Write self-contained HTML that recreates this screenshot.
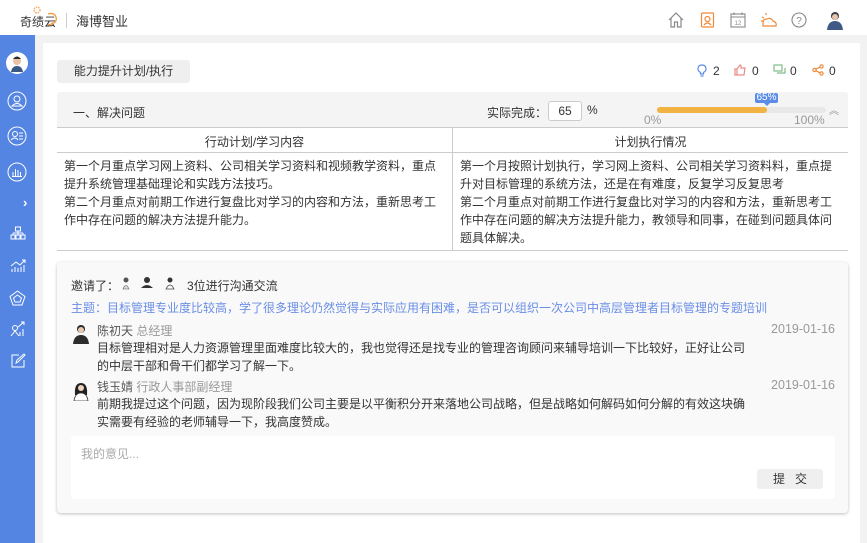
<!DOCTYPE html>
<html><head><meta charset="utf-8"><style>
*{margin:0;padding:0;box-sizing:border-box}
body{width:867px;height:543px;overflow:hidden;background:#f2f2f2;font-family:"Liberation Sans","Noto Sans CJK SC",sans-serif;font-size:12px;color:#333;position:relative}
.a{position:absolute;white-space:nowrap}
#hdr{left:0;top:0;width:867px;height:35px;background:#fff}
#side{left:0;top:35px;width:35px;height:508px;background:#5585e3}
#card{left:43px;top:43px;width:817px;height:500px;background:#fff}
.ic{position:absolute}
</style></head><body>
<div class="a" id="hdr"></div>
<div class="a" style="left:20px;top:13px;font-size:12px;color:#333">奇绩云</div>
<svg class="ic" style="left:28px;top:5px" width="32" height="22"><circle cx="9" cy="5" r="3" fill="none" stroke="#f39b3d" stroke-width="1.2" stroke-dasharray="1.5 1"/><path d="M20 20 Q30 18 28 12 Q26 7 20 9" fill="none" stroke="#f39b3d" stroke-width="1.3"/></svg>
<div class="a" style="left:66px;top:13px;width:1px;height:15px;background:#ccc"></div>
<div class="a" style="left:76px;top:11px;font-size:13px;color:#333">海博智业</div>
<svg class="ic" style="left:668px;top:12px" width="16" height="16" fill="none" stroke="#888" stroke-width="1.2"><path d="M1 8 L8 1 L15 8 M3 6 V15 H6.5 V10 H9.5 V15 H13 V6"/></svg>
<svg class="ic" style="left:700px;top:12px" width="15" height="16" fill="none" stroke="#f08a3a" stroke-width="1.2"><rect x="1.5" y="1" width="12" height="14" rx="1"/><circle cx="7.5" cy="7" r="2.5"/><path d="M4 13 Q7.5 9 11 13"/></svg>
<svg class="ic" style="left:730px;top:12px" width="16" height="16" fill="none" stroke="#888" stroke-width="1.1"><rect x="1" y="2" width="14" height="13"/><path d="M1 5 H15 M4 0.5 V3 M12 0.5 V3"/><text x="4.5" y="13" font-size="6" fill="#888" stroke="none">12</text></svg>
<svg class="ic" style="left:760px;top:12px" width="18" height="16" fill="none" stroke="#f08a3a" stroke-width="1.2"><path d="M3 14 H16 Q17 10 13 9 Q11 5 7 7 Q3 7 3 11 Z M2 5 L4 6 M6 1 L6 3 M1 9 L3 9"/></svg>
<svg class="ic" style="left:791px;top:12px" width="16" height="16" fill="none" stroke="#888" stroke-width="1.1"><circle cx="8" cy="8" r="7"/><text x="5.2" y="12" font-size="10" fill="#888" stroke="none">?</text></svg>
<svg class="ic" style="left:826px;top:11px" width="18" height="19"><circle cx="9" cy="5" r="4" fill="#3a3f4a"/><path d="M1 19 Q2 10 9 10 Q16 10 17 19 Z" fill="#3f5a86"/><circle cx="9" cy="6" r="3" fill="#e8c5a8"/></svg>

<div class="a" id="side"></div>
<svg class="ic" style="left:6px;top:52px" width="22" height="22"><circle cx="11" cy="11" r="11" fill="#fff"/><circle cx="11" cy="9" r="4" fill="#e6c2a6"/><path d="M5 20 Q6 14 11 14 Q16 14 17 20 Z" fill="#3b5783"/><path d="M7 7 Q11 2 15 7" fill="#2e2e2e"/></svg>
<svg class="ic" style="left:7px;top:91px" width="20" height="20" fill="none" stroke="#fff" stroke-width="1"><circle cx="10" cy="10" r="9"/><circle cx="10" cy="8" r="3"/><path d="M5 15 Q10 10 15 15 Z"/></svg>
<svg class="ic" style="left:7px;top:126px" width="20" height="20" fill="none" stroke="#fff" stroke-width="1"><circle cx="10" cy="10" r="9"/><circle cx="8" cy="8" r="2.5"/><path d="M4 14 Q8 10 11 14 M12 7 H16 M12 10 H16 M12 13 H16"/></svg>
<svg class="ic" style="left:7px;top:162px" width="20" height="20" fill="none" stroke="#fff" stroke-width="1"><circle cx="10" cy="10" r="9"/><path d="M6 14 V10 M8.5 14 V7 M11 14 V8 M13.5 14 V10 M5 14.5 H15"/></svg>
<div class="a" style="left:23px;top:195px;color:#fff;font-size:13px;font-weight:bold">›</div>
<svg class="ic" style="left:10px;top:226px" width="16" height="14" fill="none" stroke="#fff" stroke-width="1"><rect x="5.5" y="1" width="5" height="4"/><path d="M8 5 V7 M3 7 H13 M3 7 V9 M8 7 V9 M13 7 V9"/><rect x="1" y="9" width="4" height="4"/><rect x="6" y="9" width="4" height="4"/><rect x="11" y="9" width="4" height="4"/></svg>
<svg class="ic" style="left:10px;top:259px" width="16" height="14" fill="none" stroke="#fff" stroke-width="1"><path d="M1 7 L6 3 L10 6 L15 1 M12 1 H15 V4 M2 13 V10 M5 13 V8 M8 13 V9 M11 13 V8 M14 13 V6"/></svg>
<svg class="ic" style="left:9px;top:290px" width="17" height="16" fill="none" stroke="#fff" stroke-width="1"><path d="M8.5 1 L16 6.5 L13 15 H4 L1 6.5 Z M8.5 5 L12.5 8 L11 12 H6 L4.5 8 Z"/></svg>
<svg class="ic" style="left:10px;top:321px" width="16" height="16" fill="none" stroke="#fff" stroke-width="1"><circle cx="5" cy="7" r="2.5"/><path d="M1 15 L5 10 L9 15 M10 15 V11 M13 15 V8 M8 6 L14 1 M11 1 H14 V4"/></svg>
<svg class="ic" style="left:10px;top:353px" width="16" height="16" fill="none" stroke="#fff" stroke-width="1"><path d="M9 2 H2 V14 H14 V7"/><path d="M6 10 L7 7 L14 1 L15 2 L8 9 Z"/></svg>

<div class="a" id="card"></div>
<div class="a" style="left:57px;top:60px;width:133px;height:23px;background:#efefef;border-radius:3px;text-align:center;line-height:23px;color:#333">能力提升计划/执行</div>
<svg class="ic" style="left:697px;top:64px" width="10" height="13" fill="none" stroke="#5b8de8" stroke-width="1.2"><path d="M5 1 Q9 1 9 5 Q9 7 6.5 8.5 V10 H3.5 V8.5 Q1 7 1 5 Q1 1 5 1 M3.5 12 H6.5"/></svg>
<div class="a" style="left:713px;top:64px">2</div>
<svg class="ic" style="left:734px;top:64px" width="12" height="12" fill="none" stroke="#e98a8a" stroke-width="1.2"><path d="M1 5 H3 V11 H1 Z M3 5 L6 1 Q7.5 1 7 4 H11 L10 11 H3"/></svg>
<div class="a" style="left:752px;top:64px">0</div>
<svg class="ic" style="left:773px;top:64px" width="13" height="12" fill="none" stroke="#7fbf8a" stroke-width="1.2"><rect x="1" y="1" width="8" height="6"/><path d="M4 9 H12 V4"/></svg>
<div class="a" style="left:790px;top:64px">0</div>
<svg class="ic" style="left:812px;top:64px" width="12" height="12" fill="none" stroke="#f08a3a" stroke-width="1.2"><circle cx="9.5" cy="2.5" r="1.6"/><circle cx="2.5" cy="6" r="1.6"/><circle cx="9.5" cy="9.5" r="1.6"/><path d="M4 5.2 L8 3.2 M4 6.8 L8 8.8"/></svg>
<div class="a" style="left:829px;top:64px">0</div>

<div class="a" style="left:57px;top:92px;width:791px;height:36px;background:#f4f4f4;border-bottom:1px solid #ccc;border-radius:3px 3px 0 0"></div>
<div class="a" style="left:73px;top:104px">一、解决问题</div>
<div class="a" style="left:487px;top:104px">实际完成：</div>
<div class="a" style="left:548px;top:101px;width:34px;height:20px;background:#fff;border:1px solid #ccc;border-radius:3px;text-align:center;line-height:18px">65</div>
<div class="a" style="left:587px;top:103px">%</div>
<div class="a" style="left:657px;top:107px;width:169px;height:6px;background:#e8e8e8;border-radius:3px"></div>
<div class="a" style="left:657px;top:107px;width:110px;height:6px;background:#f2b244;border-radius:3px"></div>
<div class="a" style="left:755px;top:93px;width:23px;height:10px;background:#5b8de8;color:#fff;font-size:10px;line-height:10px;text-align:center;border-radius:2px">65%</div>
<div class="a" style="left:764px;top:103px;width:0;height:0;border:3px solid transparent;border-top-color:#5b8de8"></div>
<div class="a" style="left:644px;top:113px;color:#999;font-size:12px">0%</div>
<div class="a" style="left:794px;top:113px;color:#999;font-size:12px">100%</div>
<div class="a" style="left:829px;top:102px;color:#999;font-size:10px">︽</div>

<div class="a" style="left:57px;top:128px;width:791px;height:123px;border-bottom:1px solid #ccc"></div>
<div class="a" style="left:57px;top:152px;width:791px;height:1px;background:#ccc"></div>
<div class="a" style="left:452px;top:128px;width:1px;height:122px;background:#ccc"></div>
<div class="a" style="left:57px;top:133px;width:395px;text-align:center">行动计划/学习内容</div>
<div class="a" style="left:453px;top:133px;width:395px;text-align:center">计划执行情况</div>
<div class="a" style="left:64px;top:157px;line-height:18px;white-space:normal;width:380px">第一个月重点学习网上资料、公司相关学习资料和视频教学资料，重点<br>提升系统管理基础理论和实践方法技巧。<br>第二个月重点对前期工作进行复盘比对学习的内容和方法，重新思考工<br>作中存在问题的解决方法提升能力。</div>
<div class="a" style="left:460px;top:157px;line-height:18px;white-space:normal;width:385px">第一个月按照计划执行，学习网上资料、公司相关学习资料料，重点提<br>升对目标管理的系统方法，还是在有难度，反复学习反复思考<br>第二个月重点对前期工作进行复盘比对学习的内容和方法，重新思考工<br>作中存在问题的解决方法提升能力，教领导和同事，在碰到问题具体问<br>题具体解决。</div>

<div class="a" style="left:57px;top:262px;width:791px;height:251px;background:#f9f9f9;border-radius:4px;box-shadow:0 1px 3px rgba(0,0,0,.25)"></div>
<div class="a" style="left:71px;top:277px">邀请了：</div>
<svg class="ic" style="left:120px;top:276px" width="60" height="14"><circle cx="6" cy="4" r="2.5" fill="#555"/><path d="M3 13 Q6 6 9 13Z" fill="#ddd" stroke="#555" stroke-width=".6"/><circle cx="27" cy="4" r="3" fill="#333"/><path d="M21 12 Q27 6 33 12Z" fill="#333"/><circle cx="50" cy="4" r="2.5" fill="#333"/><path d="M46 13 Q50 5 54 13Z" fill="#fff" stroke="#444" stroke-width=".8"/></svg>
<div class="a" style="left:187px;top:277px">3位进行沟通交流</div>
<div class="a" style="left:71px;top:299px;color:#6a8ee6">主题：目标管理专业度比较高，学了很多理论仍然觉得与实际应用有困难，是否可以组织一次公司中高层管理者目标管理的专题培训</div>

<svg class="ic" style="left:72px;top:324px" width="18" height="20"><circle cx="9" cy="5" r="4" fill="#2a2a2a"/><circle cx="9" cy="6" r="3" fill="#e8c9b0"/><path d="M1 20 Q2 11 9 11 Q16 11 17 20Z" fill="#2c2c2c"/></svg>
<div class="a" style="left:97px;top:322px;color:#555">陈初天 <span style="color:#999">总经理</span></div>
<div class="a" style="left:735px;top:322px;width:100px;text-align:right;color:#999;font-size:12.5px">2019-01-16</div>
<div class="a" style="left:97px;top:339px;line-height:18px">目标管理相对是人力资源管理里面难度比较大的，我也觉得还是找专业的管理咨询顾问来辅导培训一下比较好，正好让公司<br>的中层干部和骨干们都学习了解一下。</div>

<svg class="ic" style="left:72px;top:381px" width="18" height="20"><path d="M3 14 Q2 2 9 2 Q16 2 15 14Z" fill="#222"/><circle cx="9" cy="7" r="3" fill="#f0d3be"/><path d="M2 20 Q3 12 9 12 Q15 12 16 20Z" fill="#fff" stroke="#333" stroke-width=".8"/></svg>
<div class="a" style="left:97px;top:378px;color:#555">钱玉婧 <span style="color:#999">行政人事部副经理</span></div>
<div class="a" style="left:735px;top:378px;width:100px;text-align:right;color:#999;font-size:12.5px">2019-01-16</div>
<div class="a" style="left:97px;top:395px;line-height:18px">前期我提过这个问题，因为现阶段我们公司主要是以平衡积分开来落地公司战略，但是战略如何解码如何分解的有效这块确<br>实需要有经验的老师辅导一下，我高度赞成。</div>

<div class="a" style="left:71px;top:436px;width:764px;height:63px;background:#fff;border-radius:3px"></div>
<div class="a" style="left:81px;top:445px;color:#aaa">我的意见...</div>
<div class="a" style="left:757px;top:469px;width:66px;height:20px;background:#efefef;border-radius:3px;text-align:center;line-height:20px;color:#333;letter-spacing:10px;text-indent:10px">提交</div>
</body></html>
